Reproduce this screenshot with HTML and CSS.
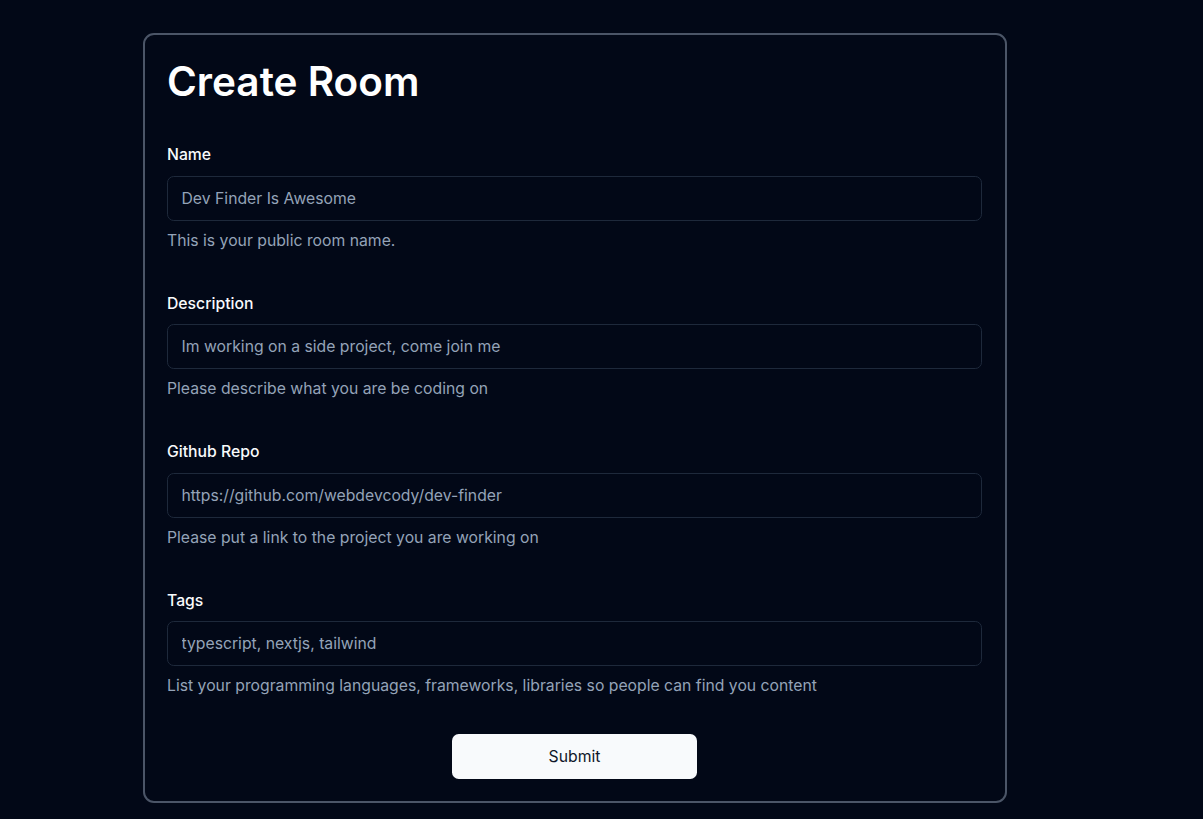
FILE: index.html
```html
<!DOCTYPE html>
<html lang="en">
<head>
<meta charset="utf-8">
<title>Create Room</title>
<link rel="stylesheet" href="styles.css">
</head>
<body>
<main class="page">
  <section class="card">
    <h1 class="title">Create Room</h1>
    <form class="form">
      <div class="field">
        <label class="label" for="name">Name</label>
        <input class="input" id="name" value="Dev Finder Is Awesome">
        <p class="hint">This is your public room name.</p>
      </div>
      <div class="field">
        <label class="label" for="desc">Description</label>
        <input class="input" id="desc" value="Im working on a side project, come join me">
        <p class="hint">Please describe what you are be coding on</p>
      </div>
      <div class="field">
        <label class="label" for="repo">Github Repo</label>
        <input class="input" id="repo" value="https://github.com/webdevcody/dev-finder">
        <p class="hint">Please put a link to the project you are working on</p>
      </div>
      <div class="field">
        <label class="label" for="tags">Tags</label>
        <input class="input" id="tags" value="typescript, nextjs, tailwind">
        <p class="hint">List your programming languages, frameworks, libraries so people can find you content</p>
      </div>
      <div class="actions">
        <button class="submit" type="button">Submit</button>
      </div>
    </form>
  </section>
</main>
</body>
</html>
```

FILE: styles.css
```css
* { box-sizing: border-box; }

html, body {
  margin: 0;
  padding: 0;
  background: #020817;
  font-family: Inter, "Liberation Sans", sans-serif;
  color: #f8fafc;
}

.page {
  padding: 33px 0 0 143px;
}

.card {
  width: 864px;
  border: 2px solid #4b5567;
  border-radius: 11px;
  padding: 24px 23px 22px 22px;
}

.title {
  margin: 0 0 40px;
  font-size: 40.5px;
  line-height: 45px;
  font-weight: 600;
  color: #ffffff;
}

.form {
  display: flex;
  flex-direction: column;
  gap: 40.5px;
}

.field {
  display: flex;
  flex-direction: column;
  gap: 9px;
}

.label {
  font-size: 15.75px;
  line-height: 22.5px;
  font-weight: 500;
  color: #f8fafc;
}

.input {
  height: 45px;
  width: 100%;
  background: #020817;
  border: 1px solid #1e293b;
  border-radius: 6.75px;
  padding: 0 13.5px;
  font-family: inherit;
  font-size: 15.75px;
  color: #94a3b8;
  outline: none;
}

.hint {
  margin: 0;
  font-size: 15.75px;
  line-height: 22.5px;
  color: #94a3b8;
}

.actions {
  display: flex;
  justify-content: center;
  margin-top: -4px;
}

.submit {
  width: 245px;
  height: 45px;
  border: none;
  border-radius: 6.75px;
  background: #f8fafc;
  color: #0f172a;
  font-family: inherit;
  font-size: 15.75px;
  font-weight: 400;
}
```
